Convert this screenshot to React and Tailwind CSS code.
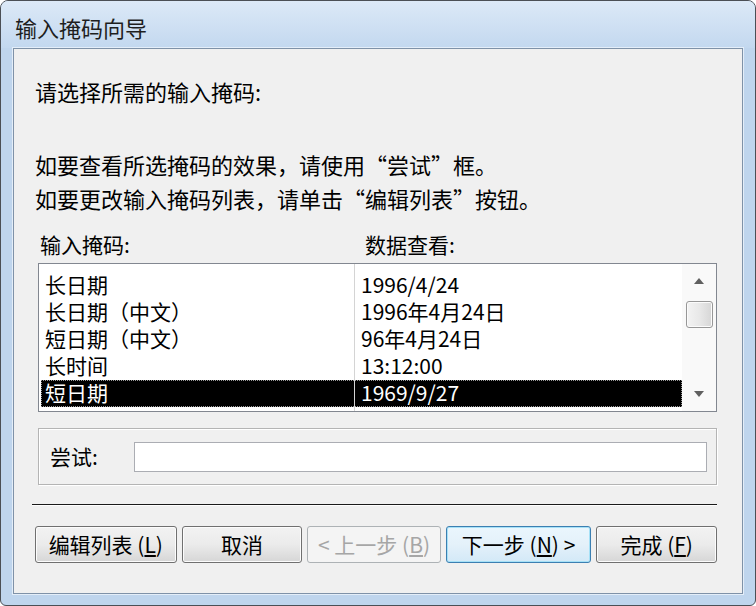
import React from 'react';

const rows = [
  ['长日期', '1996/4/24'],
  ['长日期（中文）', '1996年4月24日'],
  ['短日期（中文）', '96年4月24日'],
  ['长时间', '13:12:00'],
  ['短日期', '1969/9/27'],
];

// full-width quote marks, the CJK font draws them narrow
const LQ = () => <span className="inline-block w-[22px] text-right">“</span>;
const RQ = () => <span className="inline-block w-[22px] text-left">”</span>;

const Btn = ({ children, kind = 'normal', className = '' }) => {
  const styles = {
    normal: 'border-[#707070] bg-gradient-to-b from-[#f2f2f2] via-[#ebebeb] to-[#d6d6d6] text-black shadow-[inset_0_0_0_1px_#fcfcfc]',
    focus: 'border-[#3c7fb1] bg-gradient-to-b from-[#eaf6fd] via-[#e4f1fa] to-[#d3e9f7] text-black shadow-[inset_0_0_0_1px_#a6e1f7]',
    disabled: 'border-[#adb2b5] bg-[#f4f4f4] text-[#a6a6a6]',
  };
  return (
    <div className={`h-[37px] rounded-[3px] border flex items-center justify-center text-[21px] leading-none ${styles[kind]} ${className}`}>
      {children}
    </div>
  );
};

const Row = ({ a, b, selected }) => (
  <div className={`flex h-[27px] text-[21px] leading-[24px] ${selected ? 'bg-black text-white outline outline-1 outline-dotted outline-offset-[-1px] outline-[#9a9a9a]' : 'text-black'}`}>
    <div className="w-[313px] pl-[4px] whitespace-nowrap">{a}</div>
    <div className="flex-1 border-l border-[#d4d4d4] pl-[6px] whitespace-nowrap">{b}</div>
  </div>
);

export default function App() {
  return (
    <div className="w-[756px] h-[606px] font-['Noto_Sans_CJK_SC',sans-serif] bg-white">
      <div className="w-full h-full flex flex-col rounded-t-[8px] rounded-b-[6px] border border-[#4b4f55] bg-[#bfd5ed] overflow-hidden">
        {/* title bar */}
        <div className="h-[47px] shrink-0 flex items-center pl-[14px] pt-[6px] bg-gradient-to-b from-[#dce9f7] to-[#c3d8ef] text-[22px] text-[#1e1e1e]">
          输入掩码向导
        </div>

        {/* client area */}
        <div className="flex-1 mx-[12px] mb-[11px] border border-[#7f92a8] shadow-[0_0_0_1px_#e4eef9] bg-[#f0f0f0] flex flex-col pl-[18px] pr-[25px] text-[22px] text-black">
          <div className="mt-[25px] leading-[34px] pl-[3px]">请选择所需的输入掩码:</div>
          <div className="mt-[39px] leading-[34px] pl-[3px]">如要查看所选掩码的效果，请使用<LQ />尝试<RQ />框。</div>
          <div className="leading-[34px] pl-[3px]">如要更改输入掩码列表，请单击<LQ />编辑列表<RQ />按钮。</div>

          <div className="mt-[12px] h-[34px] flex items-center leading-none text-[21px]">
            <div className="w-[333px] pl-[8px]">输入掩码:</div>
            <div>数据查看:</div>
          </div>

          {/* list view */}
          <div className="mt-[2px] ml-[6px] h-[149px] border border-[#828790] bg-white flex">
            <div className="flex-1 flex flex-col pl-[2px]">
              <div className="h-[8px] flex">
                <div className="w-[313px]" />
                <div className="flex-1 border-l border-[#d4d4d4]" />
              </div>
              {rows.map(([a, b], i) => (
                <Row key={a} a={a} b={b} selected={i === rows.length - 1} />
              ))}
              <div className="flex-1 flex">
                <div className="w-[313px]" />
                <div className="flex-1 border-l border-[#d4d4d4]" />
              </div>
            </div>
            {/* scrollbar */}
            <div className="w-[34px] bg-[#f9f9f9] flex flex-col items-center">
              <div className="h-[34px] flex items-center justify-center">
                <svg width="10" height="6" viewBox="0 0 10 6"><path d="M0 6 L5 0 L10 6 Z" fill="#606060" /></svg>
              </div>
              <div className="w-[27px] h-[27px] mt-[3px] rounded-[3px] border border-[#979797] bg-gradient-to-r from-[#f3f3f3] via-[#e8e8e8] to-[#d6d6d6] shadow-[inset_0_0_0_1px_#fbfbfb]" />
              <div className="flex-1" />
              <div className="h-[34px] flex items-center justify-center">
                <svg width="10" height="6" viewBox="0 0 10 6"><path d="M0 0 L10 0 L5 6 Z" fill="#606060" /></svg>
              </div>
            </div>
          </div>

          {/* try box */}
          <div className="mt-[16px] ml-[6px] h-[57px] border border-[#b4b4b4] shadow-[inset_1px_1px_0_#ffffff,1px_1px_0_#ffffff] flex items-center pl-[11px] pr-[9px] text-[21px]">
            <div className="w-[84px] leading-none">尝试:</div>
            <div className="flex-1 h-[30px] border border-[#abadb3] bg-white" />
          </div>

          {/* separator */}
          <div className="mt-[19px] h-[1px] bg-[#1a1a1a] shadow-[0_1px_0_#ffffff]" />

          {/* buttons */}
          <div className="mt-[21px] flex gap-[5px] pl-[3px]">
            <Btn className="w-[142px]">编辑列表 (<span className="underline">L</span>)</Btn>
            <Btn className="w-[121px]">取消</Btn>
            <Btn kind="disabled" className="w-[134px]">&lt; 上一步 (<span className="underline">B</span>)</Btn>
            <Btn kind="focus" className="w-[146px]">下一步 (<span className="underline">N</span>) &gt;</Btn>
            <Btn className="w-[121px]">完成 (<span className="underline">F</span>)</Btn>
          </div>
        </div>
      </div>
    </div>
  );
}
